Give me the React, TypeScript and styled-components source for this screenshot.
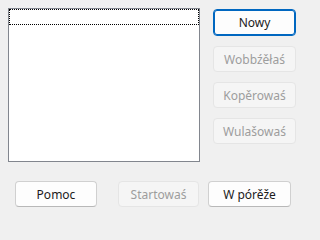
import React from 'react';
import styled, { createGlobalStyle } from 'styled-components';

const GlobalStyle = createGlobalStyle`
  html, body {
    margin: 0;
    padding: 0;
    background-color: #f0f0f0;
  }
  body {
    font-family: "Noto Sans", "Open Sans", sans-serif;
    font-size: 12px;
    color: #1b1b1b;
  }
`;

const Dialog = styled.div`
  width: 305px;
  height: 222px;
  box-sizing: border-box;
  padding: 8px 9px 0 8px;
  background-color: #f0f0f0;
`;

const TopRow = styled.div`
  display: flex;
  gap: 13px;
`;

const ListBox = styled.div`
  width: 192px;
  height: 154px;
  box-sizing: border-box;
  border: 1px solid #82868e;
  background-color: #fff;
`;

const FocusItem = styled.div`
  height: 16px;
  box-sizing: border-box;
  border: 1px dotted #000;
`;

const SideColumn = styled.div`
  display: flex;
  flex-direction: column;
  gap: 10px;
  padding-top: 1px;
`;

const Button = styled.button<{ $primary?: boolean; $width?: number }>`
  width: ${(p) => p.$width ?? 83}px;
  height: ${(p) => (p.$primary ? 27 : 26)}px;
  box-sizing: border-box;
  border-radius: 4px;
  font-family: "Noto Sans", "Open Sans", sans-serif;
  font-size: 12px;
  padding: 0;
  color: #1b1b1b;
  background-color: #fdfdfd;
  border: 1px solid #d0d0d0;
  border-bottom-color: #b8b8b8;
  ${(p) =>
    p.$primary &&
    `
    border: 1px solid #0067c0;
    box-shadow: inset 0 0 0 1px #0067c0;
  `}
  &:disabled {
    color: #9d9d9d;
    background-color: #f5f5f5;
    border-color: #e5e5e5;
  }
`;

const BottomRow = styled.div`
  display: flex;
  margin-top: 19px;
  padding-left: 7px;
`;

const Spacer = styled.div<{ $w: number }>`
  width: ${(p) => p.$w}px;
`;

const App: React.FC = () => {
  return (
    <>
      <GlobalStyle />
      <Dialog>
        <TopRow>
          <ListBox>
            <FocusItem />
          </ListBox>
          <SideColumn>
            <Button $primary>Nowy</Button>
            <Button disabled>Wobbźěłaś</Button>
            <Button disabled>Kopěrowaś</Button>
            <Button disabled>Wulašowaś</Button>
          </SideColumn>
        </TopRow>
        <BottomRow>
          <Button $width={82}>Pomoc</Button>
          <Spacer $w={21} />
          <Button $width={81} disabled>Startowaś</Button>
          <Spacer $w={9} />
          <Button>W pórěže</Button>
        </BottomRow>
      </Dialog>
    </>
  );
};

export default App;
